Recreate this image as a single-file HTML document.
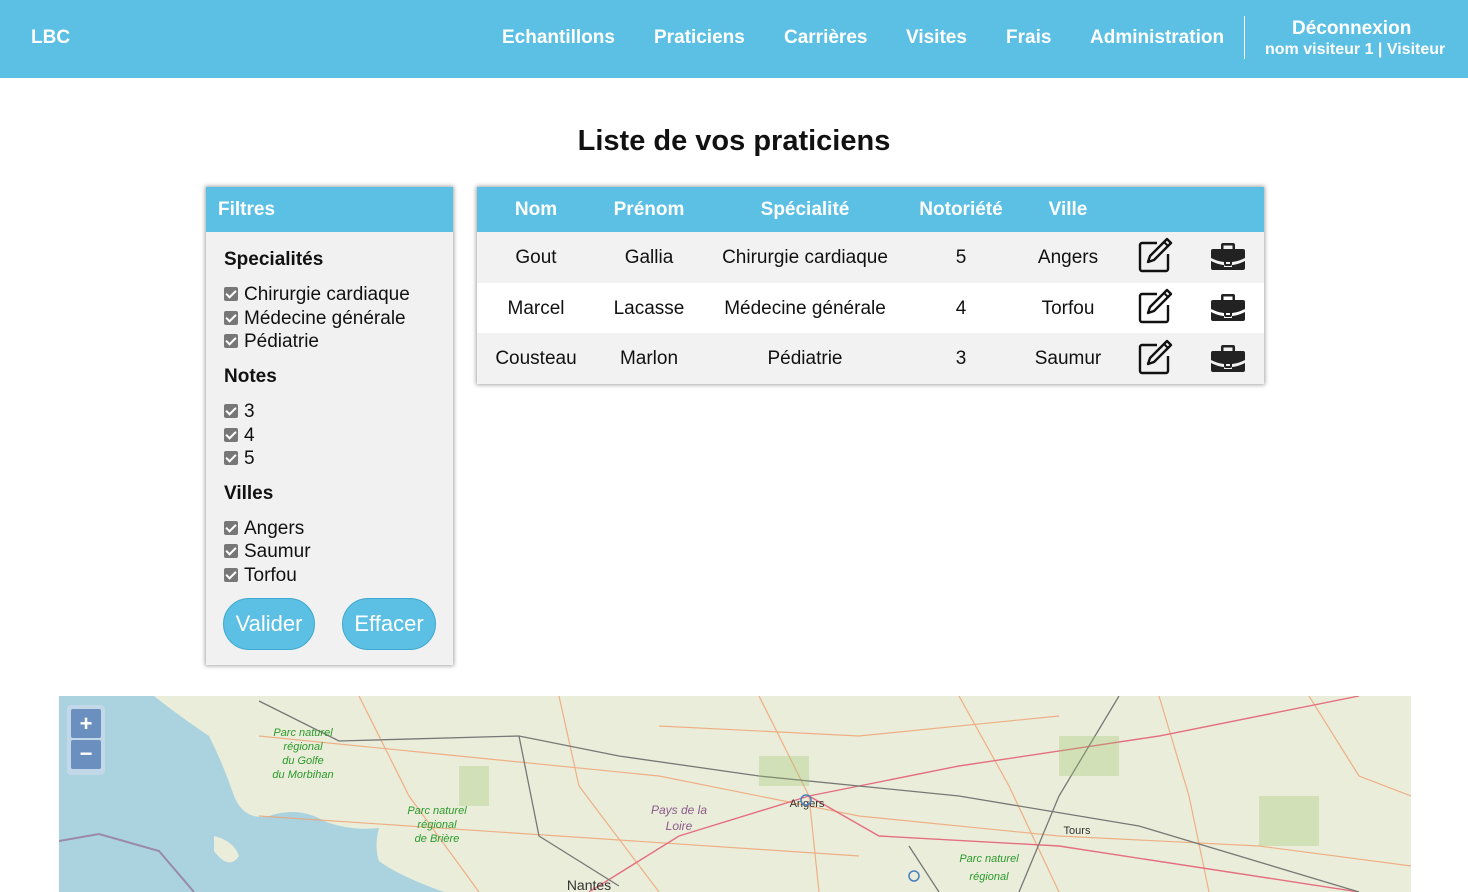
<!DOCTYPE html>
<html><head><meta charset="utf-8"><style>
*{box-sizing:border-box;margin:0;padding:0}
body{width:1468px;height:892px;overflow:hidden;background:#fff;font-family:"Liberation Sans",Arial,sans-serif;position:relative;color:#111}
.nav{position:absolute;left:0;top:0;width:1468px;height:78px;background:#5bc0e4;color:#fff;font-weight:bold}
.nav span{position:absolute;top:27px;font-size:19px}
.sep{position:absolute;left:1244px;top:16px;width:1px;height:43px;background:#fff}
h1{position:absolute;top:125px;left:0;width:1468px;text-align:center;font-size:29px;font-weight:bold}
.panel{position:absolute;left:206px;top:187px;width:247px;height:478px;background:#f1f1f1;box-shadow:0 0 4px 1px rgba(0,0,0,.35)}
.ph{height:45px;background:#5bc0e4;color:#fff;font-weight:bold;font-size:19px;padding:12px 12px}
.panel .t{position:absolute;left:18px;font-weight:bold;font-size:19px}
.panel .c{position:absolute;left:18px;font-size:19px;display:flex;align-items:center}
.cb{width:14px;height:14px;background:#777;border-radius:2px;margin-right:6px;position:relative;top:-1px}
.cb:after{content:"";position:absolute;left:4px;top:1px;width:4px;height:8px;border:solid #fff;border-width:0 2px 2px 0;transform:rotate(45deg)}
.btn{position:absolute;top:411px;height:52px;border-radius:26px;background:#5bc0e4;color:#fff;font-size:22px;text-align:center;line-height:50px;border:1px solid #3fa8d0}
.tbl{position:absolute;left:477px;top:187px;width:787px;height:197px;box-shadow:0 0 4px 1px rgba(0,0,0,.35);background:#fff}
.row{position:absolute;left:0;width:787px}
.row span{position:absolute;transform:translateX(-50%);font-size:19px;white-space:nowrap}
.hd{top:0;height:45px;background:#5bc0e4;color:#fff;font-weight:bold}
.hd span{top:12px}
.r span{top:15px}
</style></head><body>
<div class="nav">
<span style="left:31px">LBC</span>
<span style="left:502px">Echantillons</span>
<span style="left:654px">Praticiens</span>
<span style="left:784px">Carrières</span>
<span style="left:906px">Visites</span>
<span style="left:1006px">Frais</span>
<span style="left:1090px">Administration</span>
<div class="sep"></div>
<span style="left:1292px;top:18px">Déconnexion</span>
<span style="left:1265px;top:41px;font-size:16px">nom visiteur 1 | Visiteur</span>
</div>
<h1>Liste de vos praticiens</h1>
<div class="panel">
<div class="ph">Filtres</div>
<div class="t" style="top:62px">Specialités</div>
<div class="c" style="top:97px"><i class="cb"></i>Chirurgie cardiaque</div>
<div class="c" style="top:121px"><i class="cb"></i>Médecine générale</div>
<div class="c" style="top:144px"><i class="cb"></i>Pédiatrie</div>
<div class="t" style="top:179px">Notes</div>
<div class="c" style="top:214px"><i class="cb"></i>3</div>
<div class="c" style="top:238px"><i class="cb"></i>4</div>
<div class="c" style="top:261px"><i class="cb"></i>5</div>
<div class="t" style="top:296px">Villes</div>
<div class="c" style="top:331px"><i class="cb"></i>Angers</div>
<div class="c" style="top:354px"><i class="cb"></i>Saumur</div>
<div class="c" style="top:378px"><i class="cb"></i>Torfou</div>
<div class="btn" style="left:17px;width:92px">Valider</div>
<div class="btn" style="left:136px;width:94px">Effacer</div>
</div>
<div class="tbl">
<div class="row hd"><span style="left:59px">Nom</span><span style="left:172px">Prénom</span><span style="left:328px">Spécialité</span><span style="left:484px">Notoriété</span><span style="left:591px">Ville</span></div>
<div class="row r" style="top:45px;height:51px;background:#f2f2f2"><span style="left:59px">Gout</span><span style="left:172px">Gallia</span><span style="left:328px">Chirurgie cardiaque</span><span style="left:484px">5</span><span style="left:591px">Angers</span></div>
<div class="row r" style="top:96px;height:50px;background:#fff"><span style="left:59px">Marcel</span><span style="left:172px">Lacasse</span><span style="left:328px">Médecine générale</span><span style="left:484px">4</span><span style="left:591px">Torfou</span></div>
<div class="row r" style="top:146px;height:51px;background:#f2f2f2"><span style="left:59px">Cousteau</span><span style="left:172px">Marlon</span><span style="left:328px">Pédiatrie</span><span style="left:484px">3</span><span style="left:591px">Saumur</span></div>
</div>
<svg width="0" height="0" style="position:absolute"><defs>
<g id="ed"><path d="M20 6H5a2 2 0 0 0-2 2v24a2 2 0 0 0 2 2h24a2 2 0 0 0 2-2V17" fill="none" stroke="#111" stroke-width="2.4" stroke-linejoin="round"/><path d="M30 2l4 4-17 17-6 2 2-6z" fill="none" stroke="#111" stroke-width="2.4" stroke-linejoin="round"/><path d="M27 5l4 4" stroke="#111" stroke-width="2"/></g>
<g id="bc"><path d="M13 3h10a2 2 0 0 1 2 2v4h-2.5V5.5h-9V9H11V5a2 2 0 0 1 2-2z" fill="#222"/><path d="M3 9h30a2 2 0 0 1 2 2v7c-6 3-11 4-14 4h-6c-3 0-8-1-14-4v-7a2 2 0 0 1 2-2z" fill="#222"/><path d="M1 21c6 3 11 4 13 4v2h8v-2c2 0 7-1 13-4v7a2 2 0 0 1-2 2H3a2 2 0 0 1-2-2z" fill="#222"/><rect x="15" y="20" width="6" height="5" rx="1" fill="none" stroke="#222" stroke-width="2"/></g>
</defs></svg>
<svg style="position:absolute;left:1137px;top:237px" width="37" height="37"><use href="#ed"/></svg>
<svg style="position:absolute;left:1210px;top:240px" width="36" height="32"><use href="#bc"/></svg>
<svg style="position:absolute;left:1137px;top:288px" width="37" height="37"><use href="#ed"/></svg>
<svg style="position:absolute;left:1210px;top:291px" width="36" height="32"><use href="#bc"/></svg>
<svg style="position:absolute;left:1137px;top:339px" width="37" height="37"><use href="#ed"/></svg>
<svg style="position:absolute;left:1210px;top:342px" width="36" height="32"><use href="#bc"/></svg>
<svg style="position:absolute;left:59px;top:696px" width="1352" height="196" font-family="Liberation Sans,sans-serif">
<rect width="1352" height="196" fill="#eaedda"/>
<path d="M0 0H95Q120 20 150 40Q165 70 175 100Q185 125 210 120Q240 110 265 125Q290 135 320 132Q315 150 320 165Q340 180 385 196H0Z" fill="#aad3df"/>
<path d="M0 145L40 138L100 155L135 196" stroke="#9a8aa8" stroke-width="2" fill="none"/>
<path d="M155 140q20 5 25 20q-10 15 -25 -5z" fill="#eaedda"/>
<g fill="none" stroke="#f0a070" stroke-width="1.2" opacity=".8">
<path d="M200 40L400 60L600 80L800 120L1000 140L1200 150L1352 170"/>
<path d="M300 0L350 100L420 196"/><path d="M500 0L520 90L600 196"/><path d="M700 0L750 100L760 196"/>
<path d="M900 0L950 90L1000 196"/><path d="M1100 0L1130 100L1150 196"/><path d="M200 120L500 140L800 160"/>
<path d="M1250 0L1300 80L1352 100"/><path d="M600 30L800 40L1000 20"/>
</g>
<g fill="none" stroke="#e46f80" stroke-width="1.4">
<path d="M530 196L620 140L750 100L900 70L1100 40L1300 0"/><path d="M750 100L820 140L1000 150L1300 196"/>
</g>
<g fill="none" stroke="#777" stroke-width="1.3">
<path d="M200 5L280 45L460 40L560 60L700 80L900 100L1080 130L1300 196"/><path d="M460 40L480 140L560 190"/><path d="M1060 0L1000 100L960 196"/><path d="M850 150L880 196"/>
</g>
<g fill="#9bc36a" opacity=".3"><rect x="400" y="70" width="30" height="40"/><rect x="700" y="60" width="50" height="30"/><rect x="1000" y="40" width="60" height="40"/><rect x="1200" y="100" width="60" height="50"/></g>
<g font-style="italic" font-size="11" fill="#2b9a2b" text-anchor="middle">
<text x="244" y="40">Parc naturel</text><text x="244" y="54">régional</text><text x="244" y="68">du Golfe</text><text x="244" y="82">du Morbihan</text>
<text x="378" y="118">Parc naturel</text><text x="378" y="132">régional</text><text x="378" y="146">de Brière</text>
<text x="930" y="166">Parc naturel</text><text x="930" y="184">régional</text>
</g>
<g font-style="italic" font-size="12" fill="#8a5a8a" text-anchor="middle"><text x="620" y="118">Pays de la</text><text x="620" y="134">Loire</text></g>
<g font-size="11" fill="#333" text-anchor="middle"><text x="748" y="111">Angers</text><text x="1018" y="138">Tours</text><text x="530" y="194" font-size="14">Nantes</text></g>
<circle cx="747" cy="104" r="5" fill="none" stroke="#4a7fc0" stroke-width="1.5"/><circle cx="855" cy="180" r="5" fill="none" stroke="#4a7fc0" stroke-width="1.5"/>
<rect x="8" y="9" width="38" height="70" rx="4" fill="#c8d8e8" opacity=".8"/>
<rect x="12" y="13" width="30" height="29" rx="2" fill="#6b8fbf"/><rect x="12" y="44" width="30" height="29" rx="2" fill="#6b8fbf"/>
<text x="27" y="35" fill="#fff" font-size="22" font-weight="bold" text-anchor="middle">+</text>
<text x="27" y="65" fill="#fff" font-size="22" font-weight="bold" text-anchor="middle">−</text>
</svg>
</body></html>
